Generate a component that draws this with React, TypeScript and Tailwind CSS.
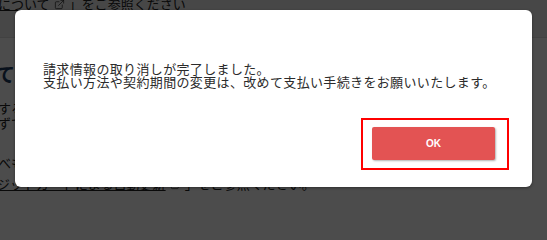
import { ExternalLink } from "lucide-react";

const JP = "font-['Noto_Sans_CJK_JP','Noto_Sans',sans-serif]";

function PageBehind() {
  return (
    <div className={`h-full min-h-[201px] bg-white text-[13px] text-[#222] ${JP} overflow-hidden`}>
      {/* header strip */}
      <div className="h-[42px] bg-[#ededed] border-b border-[#dcdcdc]">
        <div className="-mt-[4px] flex items-center whitespace-nowrap leading-[16px]">
          <span className="underline -ml-[2px]">について</span>
          <ExternalLink className="w-[11px] h-[11px] mx-[4px]" strokeWidth={1.5} />
          <span>」をご参照ください</span>
        </div>
      </div>
      <div className="pt-[24px]">
        <h2 className="text-[19px] font-bold leading-[24px] text-[#1d3a60] -ml-[4px]">て</h2>
        <p className="mt-[14px] leading-[15px] -ml-[2px]">する</p>
        <p className="leading-[15px] -ml-[2px]">ずで</p>
        <p className="mt-[25px] leading-[15px] -ml-[2px]">べも</p>
        <div className="mt-[6px] flex items-center whitespace-nowrap leading-[16px]">
          <span className="underline -ml-[3px]">ジットカードによる自動更新</span>
          <ExternalLink className="w-[11px] h-[11px] mx-[4px]" strokeWidth={1.5} />
          <span>」をご参照ください。</span>
        </div>
      </div>
    </div>
  );
}

export default function App() {
  return (
    <div className="relative w-full min-w-[547px] h-screen min-h-[201px] overflow-hidden">
      <PageBehind />
      {/* overlay */}
      <div className="absolute inset-0 bg-black/70" />
      {/* modal */}
      <div
        className={`absolute left-[15px] top-[10px] w-[517px] h-[177px] bg-white rounded-[6px] shadow-[0_1px_3px_rgba(0,0,0,0.4)] flex flex-col ${JP}`}
      >
        <div className="pt-[53px] pl-[28px] text-[13px] tracking-[0.35px] leading-[12.5px] text-[#2b2b2b] whitespace-nowrap">
          <p>請求情報の取り消しが完了しました。</p>
          <p>支払い方法や契約期間の変更は、改めて支払い手続きをお願いいたします。</p>
        </div>
        <div className="flex justify-end mt-[30px] pr-[23px]">
          <div className="border-2 border-[#ff0000] pl-[9px] pr-[12px] pt-[7px] pb-[8px]">
            <button className="block w-[123px] h-[33px] bg-[#e35353] rounded-[2px] shadow-[1px_1px_2px_rgba(0,0,0,0.3)] text-white text-[10px] font-bold font-['Liberation_Sans',Arial,sans-serif]">
              OK
            </button>
          </div>
        </div>
      </div>
    </div>
  );
}
